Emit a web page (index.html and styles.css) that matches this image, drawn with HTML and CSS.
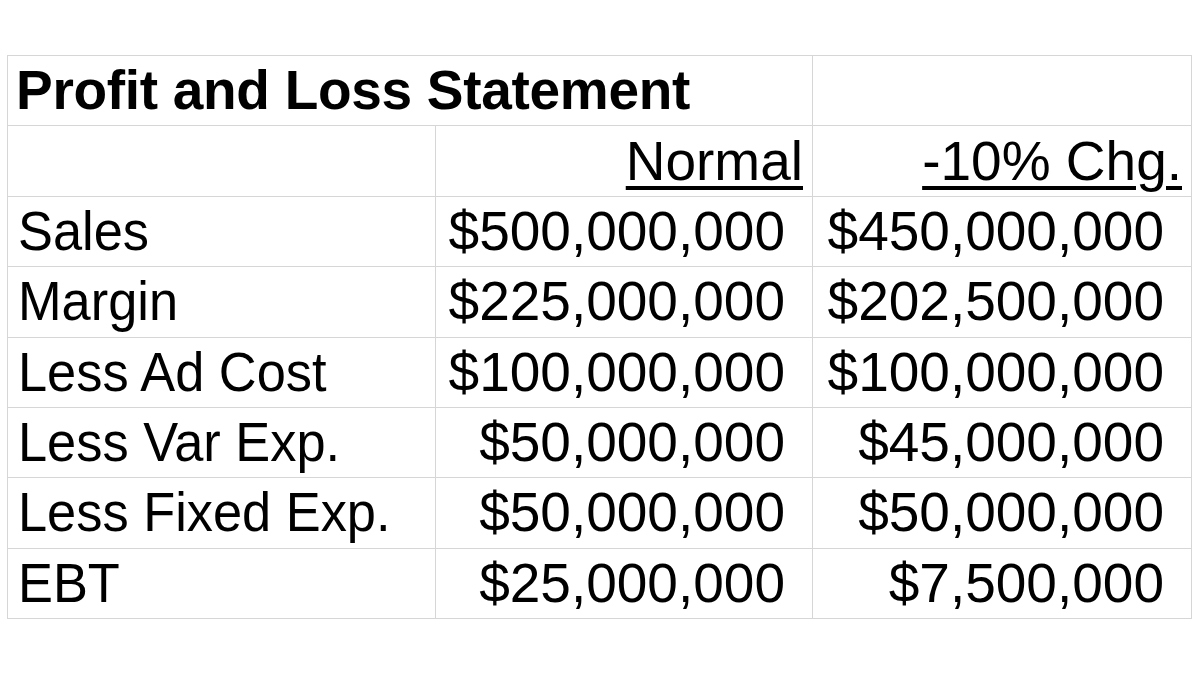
FILE: index.html
```html
<!DOCTYPE html>
<html lang="en">
<head>
<meta charset="utf-8">
<title>Profit and Loss Statement</title>
<link rel="stylesheet" href="styles.css">
</head>
<body>
<div class="sheet">
  <div class="cell title span2">Profit and Loss Statement</div>
  <div class="cell"></div>

  <div class="cell"></div>
  <div class="cell head"><span class="ul">Normal</span></div>
  <div class="cell head"><span class="ul">-10% Chg.</span></div>

  <div class="cell label"><span class="narrow">Sales</span></div>
  <div class="cell num">$500,000,000</div>
  <div class="cell num">$450,000,000</div>

  <div class="cell label"><span class="narrow">Margin</span></div>
  <div class="cell num">$225,000,000</div>
  <div class="cell num">$202,500,000</div>

  <div class="cell label"><span class="narrow">Less Ad Cost</span></div>
  <div class="cell num">$100,000,000</div>
  <div class="cell num">$100,000,000</div>

  <div class="cell label"><span class="narrow">Less Var Exp.</span></div>
  <div class="cell num">$50,000,000</div>
  <div class="cell num">$45,000,000</div>

  <div class="cell label"><span class="narrow">Less Fixed Exp.</span></div>
  <div class="cell num">$50,000,000</div>
  <div class="cell num">$50,000,000</div>

  <div class="cell label"><span class="narrow">EBT</span></div>
  <div class="cell num">$25,000,000</div>
  <div class="cell num">$7,500,000</div>
</div>
</body>
</html>
```
FILE: styles.css
```css
html, body {
  margin: 0;
  padding: 0;
  background: #ffffff;
}

body {
  padding: 55px 0 0 7px;
  font-family: "Liberation Sans", Arial, sans-serif;
  color: #000000;
}

.sheet {
  display: grid;
  grid-template-columns: 428px 377px 379px;
  grid-template-rows: repeat(8, 70.375px);
  width: max-content;
  border-top: 1px solid #d6d6d6;
  border-left: 1px solid #d6d6d6;
  box-sizing: border-box;
}

.cell {
  box-sizing: border-box;
  border-right: 1px solid #d6d6d6;
  border-bottom: 1px solid #d6d6d6;
  display: flex;
  align-items: flex-end;
  padding: 0 9px 3px 9px;
  font-size: 55px;
  line-height: 1.15;
  white-space: nowrap;
  overflow: hidden;
}

.span2 {
  grid-column: span 2;
}

.title {
  font-weight: bold;
  padding-left: 8px;
  letter-spacing: -0.3px;
}

.label {
  padding-left: 10px;
}

.narrow {
  display: inline-block;
  transform: scaleX(0.952);
  transform-origin: left bottom;
}

.head {
  justify-content: flex-end;
  padding-right: 9px;
}

.ul {
  text-decoration: underline;
  text-decoration-thickness: 4px;
  text-underline-offset: 6px;
}

.num {
  justify-content: flex-end;
  padding-right: 27px;
}
```
